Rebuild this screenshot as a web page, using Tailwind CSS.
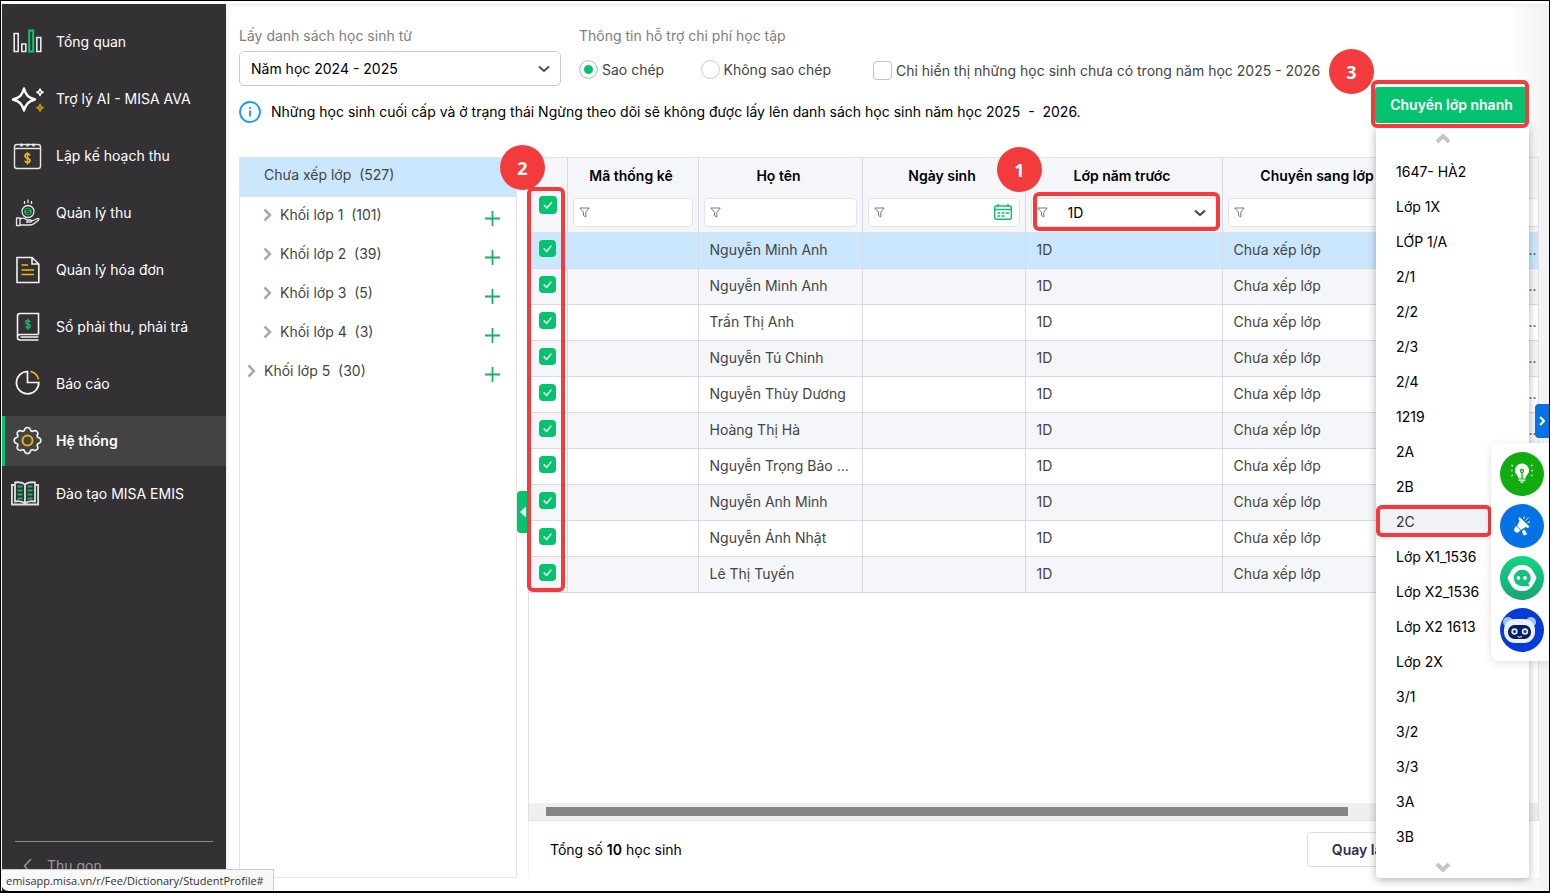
<!DOCTYPE html>
<html lang="vi">
<head>
    <meta charset="UTF-8">
    <meta name="viewport" content="width=device-width, initial-scale=1.0">
    <title>MISA EMIS - Chuyển lớp</title>
    <script src="https://cdn.jsdelivr.net/npm/@tailwindcss/browser@4"></script>
</head>
<body class="h-screen overflow-hidden bg-white border border-b-2 border-black font-['Inter','Noto_Sans',sans-serif] text-[14px] leading-5 text-[#444]">
    <div class="relative flex h-full pt-[3px] pl-px">

        <!-- Sidebar -->
        <aside class="flex flex-col w-56 shrink-0 bg-[#343135] text-white shadow-md z-10">
            <nav class="flex flex-col gap-[7px] pt-[13px]">
                <a href="#" class="flex items-center gap-[11px] h-[50px] pl-[9px]">
                    <svg class="size-[34px]" viewBox="0 0 34 34" fill="none" stroke="#e8e8e8" stroke-width="1.6">
                        <path d="M3.200 8.500h4v18h-4zM10.800 19h4v7.500h-4zM25.800 12.500h4v14h-4z"/>
                        <path stroke="#12c46d" stroke-width="2" d="M18.200 5.500h4v21h-4z"/>
                    </svg>
                    Tổng quan
                </a>
                <a href="#" class="flex items-center gap-[11px] h-[50px] pl-[9px]">
                    <svg class="size-[34px]" viewBox="0 0 34 34" fill="none" stroke="#fff" stroke-width="2.4" stroke-linejoin="round">
                        <path d="M13 6.500C15 13.500 17 15.500 24 17.500C17 19.500 15 22 13 28.500C11 22 9 19.500 2 17.500C9 15.500 11 13.500 13 6.500z"/>
                        <path stroke-width="1.600" d="M29 7l1 2.200 2 1-2 1-1 2.200-1-2.200-2-1 2-1z"/>
                        <path stroke="#c99a0a" stroke-width="1.600" d="M29 22.500l1 2.200 2 1-2 1-1 2.200-1-2.200-2-1 2-1z"/>
                    </svg>
                    Trợ lý AI - MISA AVA
                </a>
                <a href="#" class="flex items-center gap-[11px] h-[50px] pl-[9px]">
                    <svg class="size-[34px]" viewBox="0 0 34 34" fill="none" stroke="#e8e8e8" stroke-width="1.4">
                        <rect x="3.500" y="5.500" width="26" height="24" rx="2.500"/>
                        <path d="M3.500 9.500h26"/>
                        <path stroke-width="3" stroke-linecap="round" d="M10.500 6h.1M16.500 6h.1M22.500 6h.1"/>
                        <path stroke="#f0b90b" stroke-width="1.600" d="M19 16.500c-.4-1.200-1.200-1.600-2.500-1.600-3.200 0-3.400 3.800 0 4.300 3.400.5 3.300 4.400 0 4.400-1.500 0-2.300-.6-2.700-1.800M16.500 13.200v12.200"/>
                    </svg>
                    Lập kế hoạch thu
                </a>
                <a href="#" class="flex items-center gap-[11px] h-[50px] pl-[9px]">
                    <svg class="size-[34px]" viewBox="0 0 34 34" fill="none" stroke="#e8e8e8" stroke-width="1.3">
                        <circle cx="17" cy="15.500" r="6"/>
                        <path d="M13.500 5v3M17 3.500v3.500M20.500 5v3"/>
                        <path stroke-linejoin="round" d="M5.500 22h3.500v7.500H5.500zM9 23c3-1.500 5.500-.5 7 1h3.500c1.500 0 1.500 2 0 2H15M20 25.500l6.500-3c1.500-.3 1.700 1 .8 1.700-3 2.800-5.300 4.800-8.300 4.800H9"/>
                        <circle cx="17" cy="15.500" r="3.800" fill="#12b866" stroke="none"/>
                        <path stroke="#343135" stroke-width="1.100" d="M18.700 13.900c-.9-1.200-3.400-.9-3.200.5.200 1.300 3.200.9 3.200 2.300 0 1.300-2.600 1.500-3.500.2"/>
                    </svg>
                    Quản lý thu
                </a>
                <a href="#" class="flex items-center gap-[11px] h-[50px] pl-[9px]">
                    <svg class="size-[34px]" viewBox="0 0 34 34" fill="none" stroke="#f2f2f2" stroke-width="1.600">
                        <path d="M6 4.500h15l6.800 6.500v18.500H6zM21 4.500V11h6.800"/>
                        <path stroke="#f0b90b" d="M10.500 12h6.500M10.500 17h12.500M10.500 21.500h12.500"/>
                    </svg>
                    Quản lý hóa đơn
                </a>
                <a href="#" class="flex items-center gap-[11px] h-[50px] pl-[9px]">
                    <svg class="size-[34px]" viewBox="0 0 34 34" fill="none" stroke="#f2f2f2" stroke-width="1.600">
                        <path d="M27.500 24.500V3.500H9c-1.500 0-2.500 1-2.500 2.500v21.500c0 1.500 1 2.500 2.500 2.500h18.500M27.500 24.500H9c-1.500 0-2.500 1-2.500 2.500M27.500 27H9.500"/>
                        <path stroke="#12b866" stroke-width="1.500" d="M19.200 12c-.4-1.100-1.100-1.500-2.200-1.500-2.900 0-3 3.200 0 3.700 3 .5 2.900 3.800 0 3.800-1.300 0-2-.6-2.400-1.600M17 8.800v10.900"/>
                    </svg>
                    Sổ phải thu, phải trả
                </a>
                <a href="#" class="flex items-center gap-[11px] h-[50px] pl-[9px]">
                    <svg class="size-[34px]" viewBox="0 0 34 34" fill="none" stroke="#f5f5f5" stroke-width="1.700">
                        <path d="M16.500 4.500A11.200 11.200 0 1 0 27.800 15.500H16.500z"/>
                        <path stroke="#f0b90b" d="M19.500 4.500c4 .8 7 3.800 8 8"/>
                    </svg>
                    Báo cáo
                </a>
                <a href="#" class="flex items-center gap-[11px] h-[50px] pl-1.5 bg-[#434343] border-l-[3px] border-[#05c26f] font-semibold">
                    <svg class="size-[34px]" viewBox="0 0 34 34" fill="none" stroke="#f2f2f2" stroke-width="1.600" stroke-linejoin="round">
                        <path d="M13.500 6.200Q14 3.500 16.500 3.500T19.500 6.200Q20 7.300 21.500 7.400Q24.300 5.800 26 7.500T26.100 11.500Q26 13 27.300 13.500Q29.800 14 29.800 16.500T27.300 19.500Q26 20 26.100 21.500Q27.700 23.800 26 25.500T21.500 25.600Q20 25.700 19.500 26.800Q19 29.500 16.500 29.500T13.500 26.800Q13 25.700 11.500 25.600Q8.700 27.200 7 25.500T6.900 21.500Q7 20 5.700 19.500Q3.200 19 3.200 16.500T5.700 13.500Q7 13 6.900 11.500Q5.300 9.200 7 7.500T11.500 7.400Q13 7.300 13.500 6.200z"/>
                        <circle cx="16.500" cy="16.500" r="5" stroke="#e8b10c" stroke-width="2"/>
                    </svg>
                    Hệ thống
                </a>
                <a href="#" class="flex items-center gap-[11px] h-[42px] pl-[9px]">
                    <svg class="size-[34px]" viewBox="0 0 34 34" fill="none" stroke="#e0e0e0" stroke-width="1.800">
                        <path d="M3 8H.9v19.500h26.200V8H25"/>
                        <path d="M14 7.500C11.500 5 7.500 5 4 5.500v19c3.500-.6 7.500-.3 10 2 2.500-2.300 6.500-2.600 10-2v-19c-3.500-.5-7.500-.5-10 2zM14 7.500v19"/>
                        <path stroke="#12b866" stroke-width="2" d="M6.500 9.500h5M6.500 13.500h5M6.500 17.500h5M6.500 21.500h5M16.500 9.500h5M16.500 13.500h5M16.500 17.500h5M16.500 21.500h5"/>
                    </svg>
                    Đào tạo MISA EMIS
                </a>
            </nav>
            <div class="mt-auto mx-[13px] h-[50px] border-t border-[#8a8a8a]">
                <button type="button" class="flex items-center gap-3 h-12 pl-1.5 text-[#9a98a0]">
                    <svg class="size-[14px]" viewBox="0 0 14 14" fill="none" stroke="currentColor" stroke-width="1.5"><path d="M10 0L3.500 7l6.500 7"/></svg>
                    Thu gọn
                </button>
            </div>
        </aside>

        <!-- Main content -->
        <main class="relative flex flex-col flex-1 min-w-0 pl-[13px] pr-2.5 pb-[13px] bg-linear-to-l from-[#f1f1f1] via-white via-3% to-white shadow-[inset_0_2px_3px_#eee]">
            <header class="flex justify-between pt-[22px]">
                <div>
                    <div class="flex">
                        <div class="w-[322px] mr-[18px]">
                            <label for="namhoc" class="block text-[#7d7d7d]">Lấy danh sách học sinh từ</label>
                            <div class="relative mt-[5px]">
                                <select id="namhoc" class="appearance-none w-full h-[35px] px-[11px] border border-[#ccc] rounded-[5px] bg-white text-black">
                                    <option>Năm học 2024 - 2025</option>
                                </select>
                                <svg class="absolute right-[11px] top-3 size-3 pointer-events-none" viewBox="0 0 12 12" fill="none" stroke="#4d4963" stroke-width="2"><path d="M1 3.500l5 4.500 5-4.500"/></svg>
                            </div>
                        </div>
                        <div class="w-[294px]">
                            <p class="text-[#7d7d7d]">Thông tin hỗ trợ chi phí học tập</p>
                            <div class="flex items-center justify-between h-[37px] mt-[5px] pr-[42px]">
                                <label class="flex items-center gap-1">
                                    <input type="radio" name="hotro" checked class="appearance-none size-[19px] rounded-full border border-[#ccc] bg-white checked:bg-[#05c26f] checked:shadow-[inset_0_0_0_4px_white]">
                                    Sao chép
                                </label>
                                <label class="flex items-center gap-1">
                                    <input type="radio" name="hotro" class="appearance-none size-[19px] rounded-full border border-[#ccc] bg-white checked:bg-[#05c26f] checked:shadow-[inset_0_0_0_4px_white]">
                                    Không sao chép
                                </label>
                            </div>
                        </div>
                        <label class="flex items-center self-end gap-1 h-[35px]">
                            <input type="checkbox" class="appearance-none size-[19px] rounded-[4px] border border-[#c2c2c2] bg-white">
                            Chỉ hiển thị những học sinh chưa có trong năm học 2025 - 2026
                        </label>
                    </div>
                    <div class="flex items-center gap-2.5 h-6 mt-3 text-black">
                        <svg class="size-[22px]" viewBox="0 0 22 22" fill="none" stroke="#1a9cf0" stroke-width="1.800"><circle cx="11" cy="11" r="10"/><path d="M11 9.500v6M11 6v2"/></svg>
                        <p>Những học sinh cuối cấp và ở trạng thái Ngừng theo dõi sẽ không được lấy lên danh sách học sinh năm học 2025&nbsp; - &nbsp;2026.</p>
                    </div>
                </div>

                <!-- Quick transfer button and its class menu -->
                <div class="relative self-end mr-[11px] mb-px z-20">
                    <button type="button" class="block w-[153px] h-9 rounded-[3px] bg-[#05c26f] text-white font-semibold">Chuyển lớp nhanh</button>
                    <div class="absolute -top-[7px] -left-1 -right-px h-12 border-4 border-[#f33b3d] rounded-md z-10"></div>
                    <div class="absolute right-[154px] -top-[38px] size-[45px] rounded-full bg-[#f33b3d] text-white text-lg font-bold font-['Noto_Sans',sans-serif] grid place-items-center">3</div>
                    <div class="absolute top-full left-px w-[153px] mt-1 pt-[5px] bg-white rounded-b shadow-[0_2px_8px_rgba(0,0,0,0.3)] text-black">
                        <svg class="block mx-auto w-4 h-[22px] -translate-x-2.5" viewBox="0 0 16 22" fill="none" stroke="#c5c5c5" stroke-width="4"><path d="M2 10l6-6 6 6"/></svg>
                        <ul id="classMenu"></ul>
                        <svg class="block mx-auto w-4 h-5 mt-1 -translate-x-2.5" viewBox="0 0 16 20" fill="none" stroke="#c5c5c5" stroke-width="4"><path d="M2 6l6 6 6-6"/></svg>
                    </div>
                </div>
            </header>

            <div class="flex flex-1 min-h-0 mt-[33px] gap-[11px]">
                <!-- Class tree -->
                <section class="relative w-[278px] shrink-0 border border-[#e5e5e5] bg-white">
                    <div class="flex items-center h-[39px] pl-6 pb-1.5 bg-[#cbe7fe]">Chưa xếp lớp&nbsp; (527)</div>
                    <ul id="classTree"></ul>
                    <button type="button" aria-label="Thu gọn cây lớp" class="absolute -right-3 top-[333px] w-[11px] h-[42px] rounded-l bg-[#05c26f] grid place-items-center">
                        <svg class="w-1.5 h-3" viewBox="0 0 6 12" fill="#fff"><path d="M6 0.500v11L0 6z"/></svg>
                    </button>
                </section>

                <!-- Student list -->
                <section class="relative flex flex-col flex-1 min-w-0">
                    <div class="flex-1 min-h-0 overflow-hidden border border-b-0 border-[#e0e0e6] bg-white">
                        <table class="table-fixed w-[1110px] border-collapse">
                            <colgroup>
                                <col class="w-[38px]"><col class="w-[131px]"><col class="w-[164px]"><col class="w-[163px]"><col class="w-[197px]"><col class="w-[193px]"><col>
                            </colgroup>
                            <thead class="bg-[#f4f6fa] text-black">
                                <tr class="h-[74px] align-top border-b border-[#dfe1ea]">
                                    <th class="border-r border-[#d6d9e6] pt-[38px]">
                                        <span class="relative block size-[18px] mx-auto">
                                            <input type="checkbox" checked aria-label="Chọn tất cả" class="block appearance-none size-[18px] rounded-[4px] bg-[#05c26f]">
                                            <svg class="absolute inset-0 size-[18px] pointer-events-none" viewBox="0 0 18 18" fill="none" stroke="#fff" stroke-width="1.500"><path d="M5 9l3 3 5-6"/></svg>
                                        </span>
                                    </th>
                                    <th class="border-r border-[#d6d9e6] px-[5px] pt-2 font-semibold">
                                        <span class="block pr-[3px]">Mã thống kê</span>
                                        <span class="relative block mt-3">
                                            <input type="text" aria-label="Lọc mã thống kê" class="block w-full h-[29px] rounded border border-[#e4e4e4] bg-white">
                                            <svg class="absolute left-1.5 top-[9px] size-[11px]" viewBox="0 0 11 11" fill="none" stroke="#77748a"><path d="M.8 1h9.400L6.800 5.200V10L4.500 8.500V5.200z"/></svg>
                                        </span>
                                    </th>
                                    <th class="border-r border-[#d6d9e6] px-[5px] pt-2 font-semibold">
                                        <span class="block pr-[3px]">Họ tên</span>
                                        <span class="relative block mt-3">
                                            <input type="text" aria-label="Lọc họ tên" class="block w-full h-[29px] rounded border border-[#e4e4e4] bg-white">
                                            <svg class="absolute left-1.5 top-[9px] size-[11px]" viewBox="0 0 11 11" fill="none" stroke="#77748a"><path d="M.8 1h9.400L6.800 5.200V10L4.500 8.500V5.200z"/></svg>
                                        </span>
                                    </th>
                                    <th class="border-r border-[#d6d9e6] px-[5px] pt-2 font-semibold">
                                        <span class="block pr-[3px]">Ngày sinh</span>
                                        <span class="relative block mt-3">
                                            <input type="text" aria-label="Lọc ngày sinh" class="block w-full h-[29px] rounded border border-[#e4e4e4] bg-white">
                                            <svg class="absolute left-1.5 top-[9px] size-[11px]" viewBox="0 0 11 11" fill="none" stroke="#77748a"><path d="M.8 1h9.400L6.800 5.200V10L4.500 8.500V5.200z"/></svg>
                                            <svg class="absolute right-2 top-1.5 w-[18px] h-4" viewBox="0 0 18 16" fill="none" stroke="#12bd6c" stroke-width="1.400"><rect x=".7" y="2" width="16.600" height="13.300" rx="1.500"/><path d="M.7 5.500h16.600M4 0v3M14 0v3M3.500 9h2.500M7.500 9h3M12 9h3M3.500 12h2.500M7.500 12h3"/></svg>
                                        </span>
                                    </th>
                                    <th class="border-r border-[#d6d9e6] px-[5px] pt-2 font-semibold">
                                        <span class="block pr-[3px]">Lớp năm trước</span>
                                        <span class="relative block mt-3">
                                            <select aria-label="Lọc lớp năm trước" class="block appearance-none w-full h-[29px] pl-9 rounded border border-[#e4e4e4] bg-white font-normal">
                                                <option>1D</option>
                                            </select>
                                            <svg class="absolute left-1.5 top-[9px] size-[11px]" viewBox="0 0 11 11" fill="none" stroke="#77748a"><path d="M.8 1h9.400L6.800 5.200V10L4.500 8.500V5.200z"/></svg>
                                            <svg class="absolute right-[11px] top-[9px] size-3 pointer-events-none" viewBox="0 0 12 12" fill="none" stroke="#4d4963" stroke-width="2.200"><path d="M1 3.500l5 4.500 5-4.500"/></svg>
                                            <span class="absolute -top-[6px] -bottom-[4px] left-0.5 -right-[3px] border-4 border-[#f33b3d] rounded-md"></span>
                                        </span>
                                    </th>
                                    <th class="border-r border-[#d6d9e6] px-[5px] pt-2 font-semibold">
                                        <span class="block pr-[3px]">Chuyển sang lớp</span>
                                        <span class="relative block mt-3">
                                            <input type="text" aria-label="Lọc chuyển sang lớp" class="block w-full h-[29px] rounded border border-[#e4e4e4] bg-white">
                                            <svg class="absolute left-1.5 top-[9px] size-[11px]" viewBox="0 0 11 11" fill="none" stroke="#77748a"><path d="M.8 1h9.400L6.800 5.200V10L4.500 8.500V5.200z"/></svg>
                                        </span>
                                    </th>
                                    <th class="px-[5px] pt-10">
                                        <input type="text" aria-label="Lọc ghi chú" class="block w-full h-[29px] rounded border border-[#e4e4e4] bg-white">
                                    </th>
                                </tr>
                            </thead>
                            <tbody id="studentRows"></tbody>
                        </table>
                    </div>
                    <div class="h-[18px] pt-1 pl-[17px] pr-[190px] bg-[#efefef] border border-t-0 border-[#e0e0e0]">
                        <div class="h-[9px] bg-[#858585]"></div>
                    </div>
                    <footer class="flex items-center justify-between h-[57px] pl-[21px] pr-32 border-l border-[#f2f2f2] bg-white text-black">
                        <p>Tổng số <b class="font-semibold">10</b> học sinh</p>
                        <button type="button" class="w-[104px] h-[35px] border border-[#ddd] rounded bg-white font-semibold text-[#322e50]">Quay lại</button>
                    </footer>

                    <!-- Step markers -->
                    <div class="absolute top-[30px] -left-px w-[38px] h-[405px] border-4 border-[#f33b3d] rounded-md"></div>
                    <div class="absolute -top-3 -left-7 size-[45px] rounded-full bg-[#f33b3d] text-white text-lg font-bold font-['Noto_Sans',sans-serif] grid place-items-center">2</div>
                    <div class="absolute -top-2.5 left-[469px] size-[45px] rounded-full bg-[#f33b3d] text-white text-lg font-bold font-['Noto_Sans',sans-serif] grid place-items-center">1</div>
                </section>
            </div>
        </main>

        <!-- Floating tools -->
        <button type="button" aria-label="Mở thanh bên" class="absolute right-0 top-[403px] w-3.5 h-[34px] rounded-l bg-[#0573e6] grid place-items-center z-30">
            <svg class="w-1.5 h-2.5" viewBox="0 0 6 10" fill="none" stroke="#fff" stroke-width="2.200"><path d="M1 1l4 4-4 4"/></svg>
        </button>
        <div class="absolute right-0 top-[442px] flex flex-col gap-2 pt-[9px] pb-[9px] pl-[9px] pr-[5px] rounded-l-lg bg-white shadow-[0_2px_10px_rgba(0,0,0,0.12)] z-30">
            <button type="button" aria-label="Gợi ý" class="size-11 rounded-full bg-[#10ac10]">
                <svg class="size-11" viewBox="0 0 44 44" fill="none" stroke="#fff" stroke-width="1.300">
                    <path fill="#fff" stroke="none" d="M22 11.500a7 7 0 0 0-7 7c0 3.500 3 4.500 3.500 8h7c.5-3.500 3.500-4.500 3.500-8a7 7 0 0 0-7-7zM18.500 27.500h7v1.200h-7zM19.500 29.500h5L22 31.500z"/>
                    <path stroke="#10ac10" d="M22 27v-7"/><circle cx="22" cy="19" r="1.500" stroke="#10ac10"/>
                    <path d="M12.500 18.500h-1.500M13 14l-1.500-1M13 23l-1.500 1M31.500 18.500H33M31 14l1.500-1M31 23l1.500 1"/>
                </svg>
            </button>
            <button type="button" aria-label="Thông báo" class="size-11 rounded-full bg-[#0573e6]">
                <svg class="size-11" viewBox="0 0 44 44" fill="none">
                    <path fill="#fff" d="M19.500 13l10 9.500-1.500 1.500-2.500-1-4.500 3-4-4 2.500-5-1-2.500zM16 22l4.500 4.500-2.500 2c-2.500 1-5-2-3.500-4zM22 27l2.500-1.500 2.500 4.500-2 1.500-1.800-.5z"/>
                    <path stroke="#fff" d="M23.500 15l.8-2.500M25.500 16.500l3-3M27.500 18.500l2.500-.7"/>
                </svg>
            </button>
            <button type="button" aria-label="Trò chuyện" class="size-11 rounded-full bg-linear-to-b from-[#12d67f] to-[#18a376]">
                <svg class="size-11" viewBox="0 0 44 44">
                    <path fill="#fff" d="M22 9c5.500 0 9.500 2.500 11.500 7l2.500 4.500c.5 1 .5 2 0 3L33.500 28c-2 4.500-6 7-11.500 7s-9.500-2.500-11.500-7L8 23.500c-.5-1-.5-2 0-3l2.500-4.500c2-4.500 6-7 11.500-7z"/>
                    <path fill="#14c07a" d="M22 13.800a8.200 8.200 0 1 0 0 16.400h7.800l-1.600-2.400A8.200 8.200 0 0 0 22 13.800z"/>
                    <circle cx="18.500" cy="22" r="1.900" fill="#fff"/><circle cx="25" cy="22" r="1.900" fill="#fff"/>
                </svg>
            </button>
            <button type="button" aria-label="Trợ lý AVA" class="size-11 rounded-full bg-[#0a3ad6]">
                <svg class="size-11" viewBox="0 0 44 44">
                    <circle cx="8" cy="14" r="5" fill="#9cc8fb"/><circle cx="31" cy="14" r="5" fill="#9cc8fb"/>
                    <rect x="4" y="11" width="31" height="24" rx="11" fill="#e9f3ff"/>
                    <rect x="8" y="17" width="23" height="14" rx="6.500" fill="#0b1c5c"/>
                    <circle cx="14.500" cy="23.500" r="3.200" fill="#d4e8ff"/><circle cx="25" cy="23.500" r="3.200" fill="#d4e8ff"/>
                    <circle cx="14.500" cy="23.500" r="1.500" fill="#27345f"/><circle cx="25" cy="23.500" r="1.500" fill="#27345f"/>
                    <path d="M17.500 28.500q2 1.500 4.500 0" stroke="#fff" fill="none"/>
                </svg>
            </button>
        </div>

        <!-- Link status -->
        <div class="absolute left-0 bottom-0 h-[22px] w-[273px] px-[5px] border-t border-r border-[#c9c9c9] rounded-bl-lg bg-[#f8f8f8] font-['Open_Sans',sans-serif] text-[11px] leading-[22px] whitespace-nowrap text-[#333] z-30">emisapp.misa.vn/r/Fee/Dictionary/StudentProfile#</div>
    </div>

    <script>
        const students = ['Nguyễn Minh Anh', 'Nguyễn Minh Anh', 'Trần Thị Anh', 'Nguyễn Tú Chinh', 'Nguyễn Thùy Dương', 'Hoàng Thị Hà', 'Nguyễn Trọng Bảo ...', 'Nguyễn Anh Minh', 'Nguyễn Ánh Nhật', 'Lê Thị Tuyến'];
        const classes = ['1647- HÀ2', 'Lớp 1X', 'LỚP 1/A', '2/1', '2/2', '2/3', '2/4', '1219', '2A', '2B', '2C', 'Lớp X1_1536', 'Lớp X2_1536', 'Lớp X2 1613', 'Lớp 2X', '3/1', '3/2', '3/3', '3A', '3B'];
        const tree = [['Khối lớp 1', 101], ['Khối lớp 2', 39], ['Khối lớp 3', 5], ['Khối lớp 4', 3], ['Khối lớp 5', 30]];

        document.getElementById('studentRows').innerHTML = students.map((name, i) => `
            <tr class="h-9 border-b border-[#d6d9e6] ${i === 0 ? 'bg-[#cbe7fe]' : i % 2 ? 'bg-[#f4f6fa]' : 'bg-white'}">
                <td class="border-r border-[#d6d9e6] pb-[3px]">
                    <span class="relative block size-[17px] mx-auto">
                        <input type="checkbox" checked aria-label="Chọn ${name}" class="block appearance-none size-[17px] rounded-[4px] bg-[#05c26f]">
                        <svg class="absolute inset-0 size-[17px] pointer-events-none" viewBox="0 0 18 18" fill="none" stroke="#fff" stroke-width="1.500"><path d="M5 9l3 3 5-6"/></svg>
                    </span>
                </td>
                <td class="border-r border-[#d6d9e6]"></td>
                <td class="border-r border-[#d6d9e6] pl-[11px] whitespace-nowrap">${name}</td>
                <td class="border-r border-[#d6d9e6]"></td>
                <td class="border-r border-[#d6d9e6] pl-[11px]">1D</td>
                <td class="border-r border-[#d6d9e6] pl-[11px]">Chưa xếp lớp</td>
                <td class="pl-[109px]">...</td>
            </tr>`).join('');

        document.getElementById('classMenu').innerHTML = classes.map(name => name === '2C'
            ? `<li class="relative h-[35px]"><a href="#" class="flex items-center h-full pl-5 bg-[#f1f2f6] text-[#333]">${name}</a><span class="absolute top-px bottom-0.5 left-0 right-[37px] border-4 border-[#f33b3d] rounded-md"></span></li>`
            : `<li class="h-[35px]"><a href="#" class="flex items-center h-full pl-5">${name}</a></li>`).join('');

        document.getElementById('classTree').innerHTML = tree.map(([name, count], i) => `
            <li class="flex items-center h-[39px] pb-[3px] pr-4 ${i === 4 ? 'pl-[7px]' : 'pl-[23px]'}">
                <svg class="w-[9px] h-3.5 mr-2 shrink-0" viewBox="0 0 9 14" fill="none" stroke="#a9a9a9" stroke-width="2.500"><path d="M1.500 1.500L7 7l-5.500 5.500"/></svg>
                <span class="flex-1">${name}&nbsp; (${count})</span>
                <button type="button" aria-label="Thêm lớp vào ${name}" class="pt-1.5">
                    <svg class="block size-[15px]" viewBox="0 0 15 15" stroke="#1fae62" stroke-width="1.800"><path d="M7.500 0v15M0 7.500h15"/></svg>
                </button>
            </li>`).join('');
    </script>
</body>
</html>
